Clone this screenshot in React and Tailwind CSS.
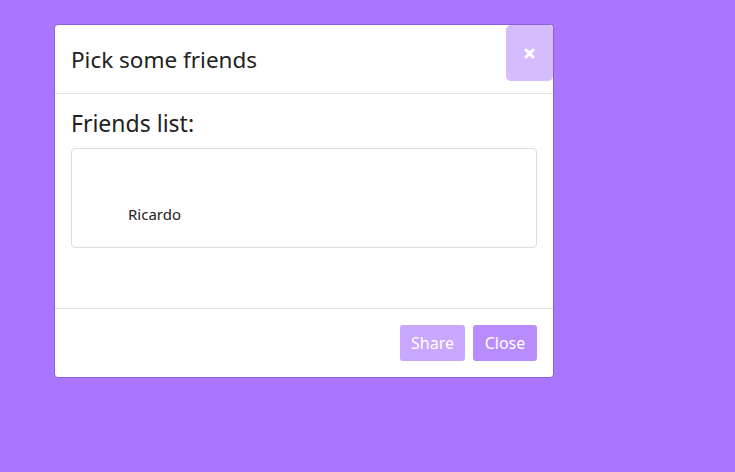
import React from 'react';

const App = () => {
  return (
    <div className="min-h-[472px] w-full bg-[#aa75ff] pt-[24px] pl-[54px]" style={{ fontFamily: '"Noto Sans", "Open Sans", sans-serif' }}>
      <div className="relative w-[500px] bg-white border border-[#8d5fd6] rounded-[4px] overflow-hidden">
        {/* Header */}
        <div className="h-[69px] flex items-center px-[16px] border-b border-[#e2e2e2]">
          <h1 className="text-[22.5px] text-[#222] leading-none mt-[3px]">Pick some friends</h1>
        </div>
        <button className="absolute top-0 right-0 w-[47px] h-[56px] bg-[#d5bcfe] rounded-[5px] flex items-center justify-center text-white">
          <svg width="11" height="11" viewBox="0 0 11 11">
            <path d="M2 2 L9 9 M9 2 L2 9" stroke="white" strokeWidth="3" strokeLinecap="round" />
          </svg>
        </button>

        {/* Body */}
        <div className="h-[215px] px-[16px] pt-[18px] border-b border-[#e2e2e2]">
          <h2 className="text-[23px] text-[#222] leading-none">Friends list:</h2>
          <div className="mt-[13px] h-[100px] border border-[#dedede] rounded-[4px] pl-[56px] pt-[53px]">
            <span className="text-[15px] text-[#222] leading-none">Ricardo</span>
          </div>
        </div>

        {/* Footer */}
        <div className="h-[68px] flex items-center justify-end gap-[8px] px-[16px]">
          <button className="h-[36px] w-[65px] rounded-[3px] bg-[#c9a7fe] text-white text-[16px]">Share</button>
          <button className="h-[36px] w-[64px] rounded-[3px] bg-[#b98cfd] text-white text-[16px]">Close</button>
        </div>
      </div>
    </div>
  );
};

export default App;
